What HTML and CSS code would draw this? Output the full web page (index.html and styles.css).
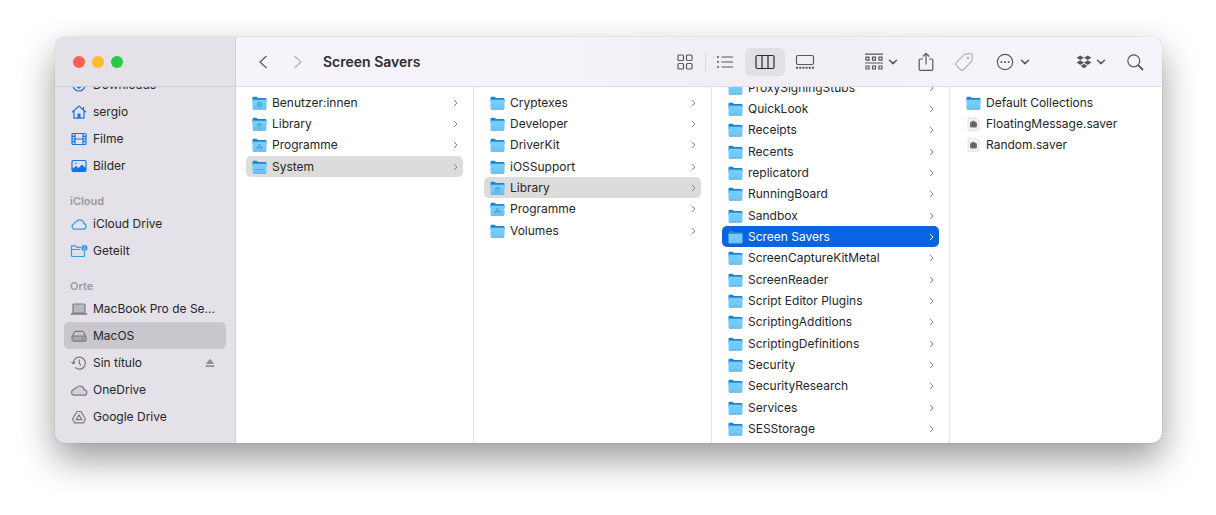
FILE: index.html
```html
<!DOCTYPE html>
<html lang="de">
<head>
    <meta charset="UTF-8">
    <meta name="viewport" content="width=device-width, initial-scale=1.0">
    <title>Screen Savers</title>
    <link rel="stylesheet" href="styles.css">
</head>
<body>
    <svg class="sprite" aria-hidden="true">
        <defs>
            <linearGradient id="front" x1="0" y1="0" x2="0" y2="1">
                <stop offset="0" stop-color="#7ccefa"/>
                <stop offset="1" stop-color="#6ac6f7"/>
            </linearGradient>
        </defs>
        <symbol id="folder" viewBox="0 0 15 14">
            <path d="M.5 2Q.5.8 1.600.8H4.500L6 2H13.400Q14.500 2 14.500 3.100V6H.5z" fill="#1d84d2"/>
            <path d="M.5 3.800H14.500V12.200Q14.500 13.200 13.500 13.200H1.500Q.5 13.200.5 12.200z" fill="url(#front)"/>
            <path d="M1 13.300H14" stroke="#5a9fc8" stroke-width=".8"/>
        </symbol>
        <symbol id="folder-users" viewBox="0 0 15 14">
            <use href="#folder"/>
            <circle cx="7.500" cy="8.500" r="2.200" fill="none" stroke="#3995d0"/>
            <circle cx="7.500" cy="8.500" r=".7" fill="#3995d0"/>
        </symbol>
        <symbol id="folder-library" viewBox="0 0 15 14">
            <use href="#folder"/>
            <path d="M4.800 8 7.500 6.200 10.200 8zM5.500 8.500V10.500M7.500 8.500V10.500M9.500 8.500V10.500M4.500 11H10.500" fill="#4ba3dc" stroke="#4ba3dc" stroke-width=".6"/>
        </symbol>
        <symbol id="folder-apps" viewBox="0 0 15 14">
            <use href="#folder"/>
            <path d="M7.500 6 5.200 11M7.500 6 9.800 11M4.500 9.600H10.500" fill="none" stroke="#3995d0" stroke-width=".8"/>
        </symbol>
        <symbol id="folder-system" viewBox="0 0 15 14">
            <use href="#folder"/>
            <path d="M3 9.500H12" stroke="#4ba3dc" stroke-width=".8"/>
        </symbol>
        <symbol id="saver" viewBox="0 0 15 14">
            <path d="M2 .8H10L13 3.500V13.300H2z" fill="#f4f4f4" stroke="#dedede" stroke-width=".8"/>
            <path d="M4 9.500V6.500Q4 4.800 5.500 4.600L7.500 3.500 9 4.600Q11 5 11 6.500V9.500Q11 10.600 10 10.600H5Q4 10.600 4 9.500z" fill="#777"/>
            <circle cx="7.500" cy="7.600" r="1.700" fill="none" stroke="#444" stroke-width=".8"/>
        </symbol>
        <symbol id="arrow" viewBox="0 0 5 8">
            <path d="M1 1 4 4 1 7" fill="none" stroke="currentColor"/>
        </symbol>
        <symbol id="chevron" viewBox="0 0 10 6">
            <path d="M1.500 1.200 5 4.600 8.500 1.200" fill="none" stroke="currentColor" stroke-width="1.500" stroke-linecap="round" stroke-linejoin="round"/>
        </symbol>
    </svg>

    <div class="window">
        <aside class="sidebar">
            <div class="lights">
                <button class="light red" aria-label="Schließen"></button>
                <button class="light yellow" aria-label="Minimieren"></button>
                <button class="light green" aria-label="Vollbild"></button>
            </div>
            <nav class="places">
                <div class="places-list">
                    <a class="place" href="#"><svg class="place-icon blue" viewBox="0 0 18 16"><circle cx="9" cy="8" r="6"/><path d="M9 4.500V11M6 8.500 9 11.200 12 8.500"/></svg>Downloads</a>
                    <a class="place" href="#"><svg class="place-icon blue" viewBox="0 0 18 16"><path d="M2 8.200 9 2 16 8.200M4 7V14.200H14V7M13.500 5.500V3"/><path class="fill" d="M7.500 9.500H10.500V14H7.500z"/></svg>sergio</a>
                    <a class="place" href="#"><svg class="place-icon blue" viewBox="0 0 18 16"><rect x="2" y="2.500" width="14" height="11" rx="1"/><path d="M5 2.500V13.500M13 2.500V13.500M5 8H13M2 5.300H5M2 8H5M2 10.700H5M13 5.300H16M13 8H16M13 10.700H16"/></svg>Filme</a>
                    <a class="place" href="#"><svg class="place-icon blue" viewBox="0 0 18 16"><rect x="2" y="2.500" width="14" height="11" rx="1.500"/><path class="fill" d="M2 11 6 8 8.500 10 12 6.500 16 10.500V13.500H2z"/><circle class="fill" cx="6" cy="5.500" r=".8"/></svg>Bilder</a>

                    <h2 class="places-title">iCloud</h2>
                    <a class="place" href="#"><svg class="place-icon sky" viewBox="0 0 18 16"><path d="M5 13.200H13.500A2.800 2.800 0 0 0 14 7.700 4.300 4.300 0 0 0 6 6 2.500 2.500 0 0 0 3.800 8 2.700 2.700 0 0 0 5 13.200z"/></svg>iCloud Drive</a>
                    <a class="place" href="#"><svg class="place-icon sky" viewBox="0 0 18 16"><path d="M11 4.300H7L5.500 2.800H1.500V12.500Q1.500 13.500 2.500 13.500H13.500Q14.500 13.500 14.500 12.500V8.500M1.500 6.500H10.500"/><circle class="fill" cx="14.500" cy="5" r="3"/><path d="M14.500 3.500V4.500M13.500 6H15.500" stroke="#e4e1e8"/></svg>Geteilt</a>

                    <h2 class="places-title">Orte</h2>
                    <a class="place" href="#"><svg class="place-icon grey" viewBox="0 0 18 16"><rect x="3" y="3" width="12" height="9" rx="1" fill="#b9b8bc"/><path d="M.8 13H17.200" stroke-width="1.500"/></svg>MacBook Pro de Se...</a>
                    <a class="place active" href="#"><svg class="place-icon grey" viewBox="0 0 18 16"><path d="M2 9 4.500 4Q4.800 3.300 5.500 3.300H12.500Q13.200 3.300 13.500 4L16 9"/><rect x="2" y="8" width="14" height="5.200" rx="2" fill="#aaa9ad"/><path d="M11.500 10.600H13.500"/></svg>MacOS</a>
                    <a class="place" href="#"><svg class="place-icon grey" viewBox="0 0 18 16"><path d="M3.400 8A6 6 0 1 1 5.200 12.400M1.500 6.800 3.300 8.800 5.200 6.800M9.300 4.500V8.200L11 10.500"/></svg>Sin título<svg class="eject" viewBox="0 0 10 10"><path d="M5 .8 9.300 6H.7zM.7 7.300H9.300V9H.7z"/></svg></a>
                    <a class="place" href="#"><svg class="place-icon grey" viewBox="0 0 18 16"><path d="M4 13.200H14A2.700 2.700 0 0 0 14.300 7.800 4.500 4.500 0 0 0 6 6.200 3 3 0 0 0 3.500 7.600 2.900 2.900 0 0 0 4 13.200z" fill="#d3d1d7"/></svg>OneDrive</a>
                    <a class="place" href="#"><svg class="place-icon grey" viewBox="0 0 18 16"><path d="M7 2.500H11L15.500 10.300 13.500 13.800H4.500L2.500 10.300z" stroke-linejoin="round"/><path d="M9 6 11.800 10.700H6.200z"/></svg>Google Drive</a>
                </div>
            </nav>
        </aside>

        <main class="main">
            <header class="toolbar">
                <div class="history">
                    <button class="tool" aria-label="Zurück"><svg width="10" height="16" viewBox="0 0 10 16"><path d="M8.500 2 2 8 8.500 14"/></svg></button>
                    <button class="tool" aria-label="Vorwärts" disabled><svg width="10" height="16" viewBox="0 0 10 16"><path d="M1.500 2 8 8 1.500 14"/></svg></button>
                </div>
                <h1 class="title">Screen Savers</h1>
                <div class="views">
                    <button class="view" aria-label="Symbole"><svg width="18" height="18" viewBox="0 0 18 18"><rect x="2" y="2" width="5.500" height="5.500" rx="1"/><rect x="10.500" y="2" width="5.500" height="5.500" rx="1"/><rect x="2" y="10.500" width="5.500" height="5.500" rx="1"/><rect x="10.500" y="10.500" width="5.500" height="5.500" rx="1"/></svg></button>
                    <button class="view divided" aria-label="Liste"><svg width="18" height="18" viewBox="0 0 18 18"><path d="M5.500 4H17M5.500 9H17M5.500 14H17"/><path d="M1 4H3M1 9H3M1 14H3" stroke-width="1.500"/></svg></button>
                    <button class="view selected" aria-label="Spalten"><svg width="20" height="18" viewBox="0 0 20 18"><rect x="1" y="2.500" width="18" height="13" rx="1.500"/><path d="M7 2.500V15.500M13 2.500V15.500"/></svg></button>
                    <button class="view" aria-label="Galerie"><svg width="20" height="18" viewBox="0 0 20 18"><rect x="1.500" y="2.500" width="17" height="9" rx="1.500"/><path d="M1 14.800H19" stroke-width="2" stroke-dasharray="2 1.200"/></svg></button>
                </div>
                <button class="tool" aria-label="Gruppieren"><svg width="20" height="18" viewBox="0 0 20 18"><path d="M1 1.200H19M1 10H19"/><path d="M2 4.200H5V7.200H2zM8.500 4.200H11.500V7.200H8.500zM15 4.200H18V7.200H15zM2 13H5V16H2zM8.500 13H11.500V16H8.500zM15 13H18V16H15z"/></svg><svg width="10" height="6"><use href="#chevron"/></svg></button>
                <button class="tool" aria-label="Teilen"><svg width="16" height="20" viewBox="0 0 16 20"><path d="M5 7H2.500Q1.200 7 1.200 8.300V17Q1.200 18.300 2.500 18.300H13.500Q14.800 18.300 14.800 17V8.300Q14.800 7 13.500 7H11M8 12.500V1.500M4.800 4.500 8 1.300 11.200 4.500"/></svg></button>
                <button class="tool" aria-label="Tags" disabled><svg width="20" height="20" viewBox="0 0 20 20"><path d="M10.500 2.300 16.500 1.600Q18.300 1.500 18.300 3.300L17.800 9 9.500 17.800Q8 19 6.600 17.700L2.200 13.300Q1 12 2.200 10.700z" stroke-linejoin="round"/><circle cx="14" cy="6" r=".7"/></svg></button>
                <button class="tool" aria-label="Aktionen"><svg width="22" height="20" viewBox="0 0 22 20"><circle cx="11" cy="10" r="7.700"/><path d="M7.400 10H7.500M11 10H11.100M14.600 10H14.700" stroke-width="2" stroke-linecap="round"/></svg><svg width="10" height="6"><use href="#chevron"/></svg></button>
                <button class="tool dropbox" aria-label="Dropbox"><svg width="16" height="16" viewBox="0 0 16 16"><path class="fill" d="M4.300 1.500 8 3.800 4.300 6.100.6 3.800zM11.700 1.500 15.400 3.800 11.700 6.100 8 3.800zM4.300 6.300 8 8.600 4.300 10.900.6 8.600zM11.700 6.300 15.400 8.600 11.700 10.900 8 8.600zM8 9.800 11.300 12 8 14.200 4.700 12z"/></svg><svg width="10" height="6"><use href="#chevron"/></svg></button>
                <button class="tool" aria-label="Suchen"><svg width="18" height="18" viewBox="0 0 18 18"><circle cx="7.800" cy="7.800" r="6"/><path d="M12.200 12.200 16.500 16.500" stroke-width="1.800" stroke-linecap="round"/></svg></button>
            </header>

            <div class="columns">
                <div class="column">
                    <a class="row" href="#"><svg class="file-icon"><use href="#folder-users"/></svg>Benutzer:innen<svg class="arrow"><use href="#arrow"/></svg></a>
                    <a class="row" href="#"><svg class="file-icon"><use href="#folder-library"/></svg>Library<svg class="arrow"><use href="#arrow"/></svg></a>
                    <a class="row" href="#"><svg class="file-icon"><use href="#folder-apps"/></svg>Programme<svg class="arrow"><use href="#arrow"/></svg></a>
                    <a class="row open" href="#"><svg class="file-icon"><use href="#folder-system"/></svg>System<svg class="arrow"><use href="#arrow"/></svg></a>
                </div>
                <div class="column">
                    <a class="row" href="#"><svg class="file-icon"><use href="#folder"/></svg>Cryptexes<svg class="arrow"><use href="#arrow"/></svg></a>
                    <a class="row" href="#"><svg class="file-icon"><use href="#folder"/></svg>Developer<svg class="arrow"><use href="#arrow"/></svg></a>
                    <a class="row" href="#"><svg class="file-icon"><use href="#folder"/></svg>DriverKit<svg class="arrow"><use href="#arrow"/></svg></a>
                    <a class="row" href="#"><svg class="file-icon"><use href="#folder"/></svg>iOSSupport<svg class="arrow"><use href="#arrow"/></svg></a>
                    <a class="row open" href="#"><svg class="file-icon"><use href="#folder-library"/></svg>Library<svg class="arrow"><use href="#arrow"/></svg></a>
                    <a class="row" href="#"><svg class="file-icon"><use href="#folder-apps"/></svg>Programme<svg class="arrow"><use href="#arrow"/></svg></a>
                    <a class="row" href="#"><svg class="file-icon"><use href="#folder"/></svg>Volumes<svg class="arrow"><use href="#arrow"/></svg></a>
                </div>
                <div class="column scrolled">
                    <a class="row" href="#"><svg class="file-icon"><use href="#folder"/></svg>ProxySigningStubs<svg class="arrow"><use href="#arrow"/></svg></a>
                    <a class="row" href="#"><svg class="file-icon"><use href="#folder"/></svg>QuickLook<svg class="arrow"><use href="#arrow"/></svg></a>
                    <a class="row" href="#"><svg class="file-icon"><use href="#folder"/></svg>Receipts<svg class="arrow"><use href="#arrow"/></svg></a>
                    <a class="row" href="#"><svg class="file-icon"><use href="#folder"/></svg>Recents<svg class="arrow"><use href="#arrow"/></svg></a>
                    <a class="row" href="#"><svg class="file-icon"><use href="#folder"/></svg>replicatord<svg class="arrow"><use href="#arrow"/></svg></a>
                    <a class="row" href="#"><svg class="file-icon"><use href="#folder"/></svg>RunningBoard<svg class="arrow"><use href="#arrow"/></svg></a>
                    <a class="row" href="#"><svg class="file-icon"><use href="#folder"/></svg>Sandbox<svg class="arrow"><use href="#arrow"/></svg></a>
                    <a class="row current" href="#"><svg class="file-icon"><use href="#folder"/></svg>Screen Savers<svg class="arrow"><use href="#arrow"/></svg></a>
                    <a class="row" href="#"><svg class="file-icon"><use href="#folder"/></svg>ScreenCaptureKitMetal<svg class="arrow"><use href="#arrow"/></svg></a>
                    <a class="row" href="#"><svg class="file-icon"><use href="#folder"/></svg>ScreenReader<svg class="arrow"><use href="#arrow"/></svg></a>
                    <a class="row" href="#"><svg class="file-icon"><use href="#folder"/></svg>Script Editor Plugins<svg class="arrow"><use href="#arrow"/></svg></a>
                    <a class="row" href="#"><svg class="file-icon"><use href="#folder"/></svg>ScriptingAdditions<svg class="arrow"><use href="#arrow"/></svg></a>
                    <a class="row" href="#"><svg class="file-icon"><use href="#folder"/></svg>ScriptingDefinitions<svg class="arrow"><use href="#arrow"/></svg></a>
                    <a class="row" href="#"><svg class="file-icon"><use href="#folder"/></svg>Security<svg class="arrow"><use href="#arrow"/></svg></a>
                    <a class="row" href="#"><svg class="file-icon"><use href="#folder"/></svg>SecurityResearch<svg class="arrow"><use href="#arrow"/></svg></a>
                    <a class="row" href="#"><svg class="file-icon"><use href="#folder"/></svg>Services<svg class="arrow"><use href="#arrow"/></svg></a>
                    <a class="row" href="#"><svg class="file-icon"><use href="#folder"/></svg>SESStorage<svg class="arrow"><use href="#arrow"/></svg></a>
                </div>
                <div class="column last">
                    <a class="row" href="#"><svg class="file-icon"><use href="#folder"/></svg>Default Collections</a>
                    <a class="row" href="#"><svg class="file-icon"><use href="#saver"/></svg>FloatingMessage.saver</a>
                    <a class="row" href="#"><svg class="file-icon"><use href="#saver"/></svg>Random.saver</a>
                </div>
            </div>
        </main>
    </div>
</body>
</html>
```
FILE: styles.css
```css
* {
    box-sizing: border-box;
}
body {
    margin: 0;
    padding: 37px 54px 72px 55px;
    background: #fff;
    color: #262626;
    font-family: Inter, 'Liberation Sans', sans-serif;
    font-size: 12px;
}
a {
    color: inherit;
    text-decoration: none;
}
button {
    padding: 0;
    border: none;
    background: none;
    color: #58575c;
}
.sprite {
    position: absolute;
    width: 0;
    height: 0;
}
.window {
    display: flex;
    overflow: hidden;
    border-radius: 10px;
    background: #fff;
    box-shadow: 0 0 1px rgba(0, 0, 0, 0.45), 0 16px 36px rgba(0, 0, 0, 0.4);
}

/* sidebar */
.sidebar {
    flex: 0 0 181px;
    border-right: 1px solid #d2d0d6;
    background: #e4e1e8;
}
.lights {
    display: flex;
    align-items: center;
    gap: 7px;
    height: 50px;
    padding-left: 18px;
    border-bottom: 1px solid #cfcdd3;
}
.light {
    width: 12px;
    height: 12px;
    border-radius: 50%;
}
.red {
    background: #fe5f57;
}
.yellow {
    background: #febb2e;
}
.green {
    background: #28c840;
}
.places {
    overflow: hidden;
    padding: 0 9px 13px;
}
.places-list {
    margin-top: -16px;
}
.place {
    display: flex;
    align-items: center;
    gap: 5px;
    height: 27px;
    padding: 0 10px 0 6px;
    border-radius: 5px;
    white-space: nowrap;
}
.place.active {
    background: #c9c6cd;
}
.place-icon {
    width: 18px;
    height: 16px;
    fill: none;
    stroke: currentColor;
    stroke-width: 1.2;
}
.fill {
    fill: currentColor;
    stroke: none;
}
.blue {
    color: #1277e6;
}
.sky {
    color: #2f9bee;
}
.grey {
    color: #7a797e;
}
.eject {
    width: 12px;
    height: 10px;
    margin-left: auto;
    fill: #929096;
}
.places-title {
    height: 17px;
    margin: 14px 0 0 6px;
    color: #9b999f;
    font-size: 11px;
    font-weight: 600;
    line-height: 17px;
}

/* toolbar */
.main {
    flex: 1;
    min-width: 0;
}
.toolbar {
    display: flex;
    align-items: center;
    gap: 20px;
    height: 50px;
    padding: 0 18px 0 22px;
    border-bottom: 1px solid #e0dee4;
    background: linear-gradient(90deg, #f6f4fa 30%, #f1eff5 50%, #f1eff5 65%, #f6f4fa 80%);
}
.history {
    display: flex;
    gap: 25px;
}
.title {
    flex: 1;
    margin: 0;
    color: #2c2b30;
    font-size: 14px;
    font-weight: 600;
    white-space: nowrap;
}
.tool {
    display: flex;
    align-items: center;
    gap: 4px;
}
.tool:disabled {
    color: #b3b1b7;
}
.tool svg,
.view svg {
    fill: none;
    stroke: currentColor;
    stroke-width: 1.2;
}
.tool svg .fill {
    fill: currentColor;
    stroke: none;
}
.views {
    display: flex;
    margin-right: 19px;
}
.view {
    display: flex;
    align-items: center;
    justify-content: center;
    width: 40px;
    height: 28px;
    border-radius: 6px;
}
.view.selected {
    background: #e2dfe7;
    color: #29282c;
}
.divided {
    border-radius: 0;
    background: linear-gradient(#dcdae0, #dcdae0) left center / 1px 18px no-repeat;
}
.dropbox {
    margin-left: 26px;
}

/* file columns */
.columns {
    display: flex;
    overflow: hidden;
}
.column {
    flex: 0 0 238px;
    padding: 5px 10px;
    border-right: 1px solid #e3e3e3;
}
.column.last {
    flex: 1;
    border-right: none;
}
.column.scrolled {
    margin-top: -10px;
    padding: 0 10px 4px;
}
.row {
    display: flex;
    align-items: center;
    gap: 5px;
    height: 21px;
    padding: 0 5px 0 6px;
    border-radius: 5px;
    white-space: nowrap;
}
.row:nth-child(3n) {
    margin-bottom: 1px;
}
.row.open {
    background: #dcdcdc;
}
.row.current {
    background: #0a63e1;
    color: #fff;
}
.file-icon {
    width: 15px;
    height: 14px;
}
.arrow {
    width: 5px;
    height: 8px;
    margin-left: auto;
    color: #8a8a8a;
}
.current .arrow {
    color: #fff;
}
```
